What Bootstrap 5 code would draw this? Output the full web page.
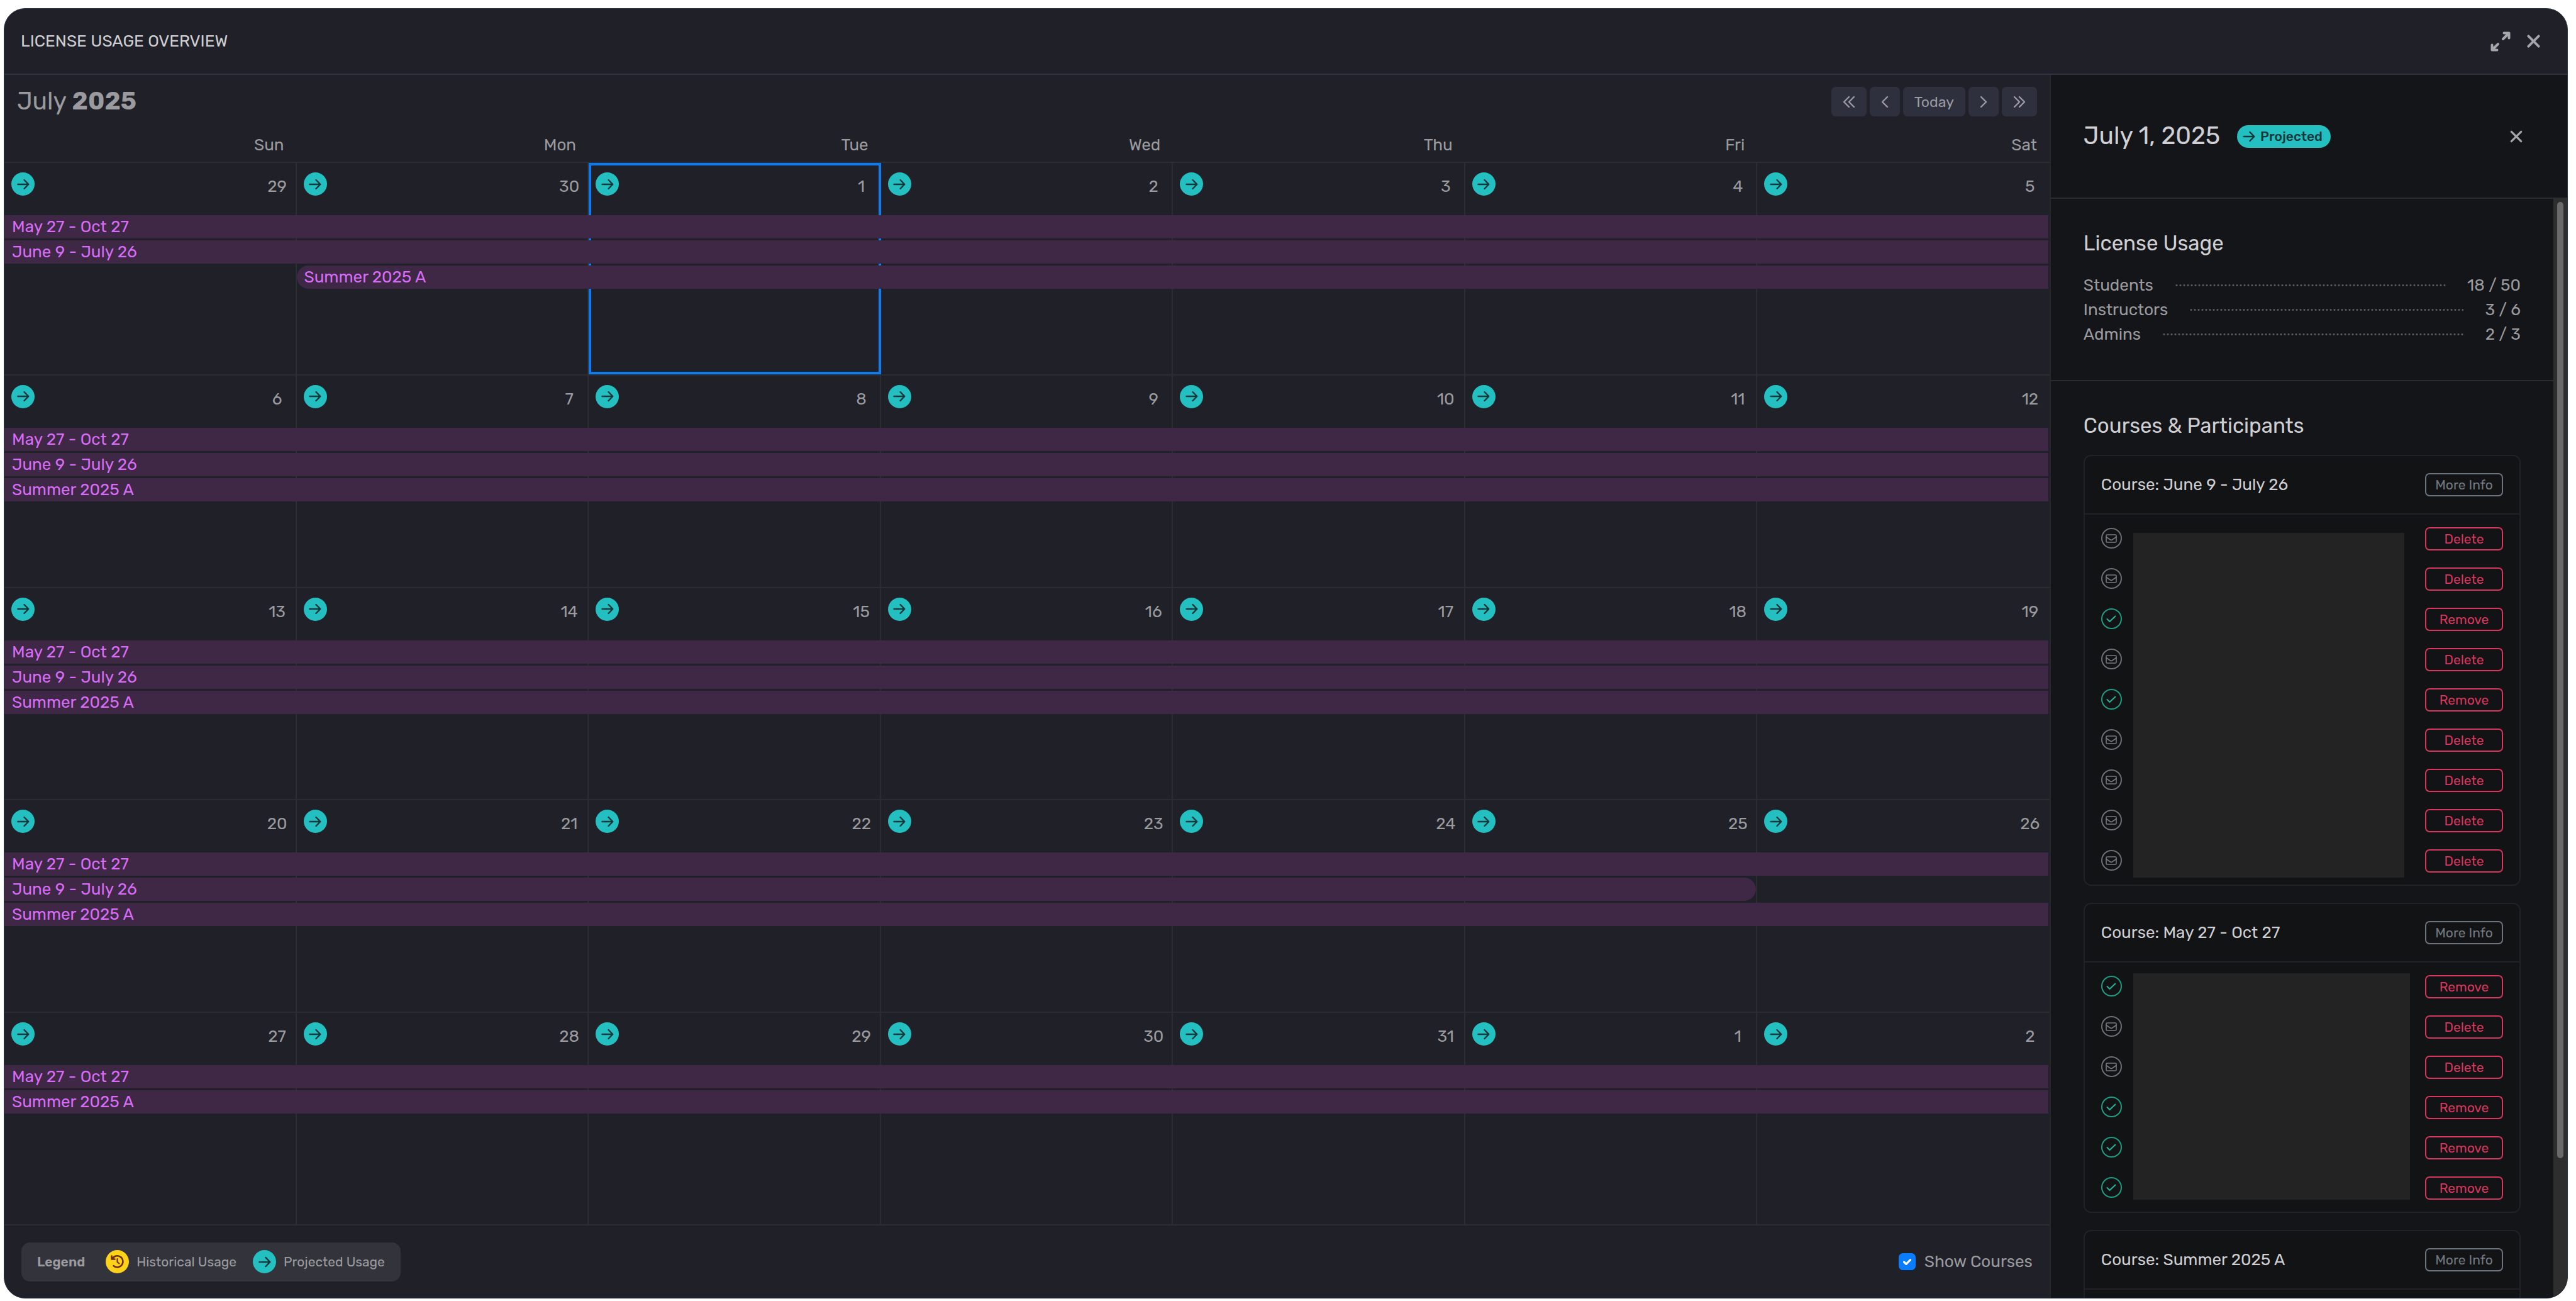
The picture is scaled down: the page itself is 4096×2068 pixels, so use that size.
<!DOCTYPE html>
<html lang="en" data-bs-theme="dark">
<head>
<meta charset="utf-8">
<meta name="viewport" content="width=device-width, initial-scale=1">
<title>License Usage Overview</title>
<link href="https://cdn.jsdelivr.net/npm/bootstrap@5.3.0/dist/css/bootstrap.min.css" rel="stylesheet">
<style>
  :root { --line: #2c2d32; --muted: #9b9b9f; --bright: #cfcfd3; --teal: #24bfc0; }
  body { background: #fff; font-family: Rubik, Roboto, sans-serif; font-size: 26px; line-height: 40px; color: var(--muted); height: 100vh; padding: 13px 13px 4px 6px; overflow: hidden; }
  svg { display: block; fill: none; stroke: currentColor; stroke-linecap: round; stroke-linejoin: round; }
  h1, h2, h3, h4 { margin: 0; font-weight: 400; color: var(--bright); }
  .shell { background: #1f2028; border: 1px solid #2b3746; border-radius: 34px; overflow: hidden; }
  .shell-head { height: 105px; padding: 0 43px 0 26px; border-bottom: 2px solid #2b3440; }
  .shell-head h1 { font-size: 26px; }
  .head-tools { gap: 26px; }
  .icon-btn { padding: 0; border: 0; background: none; color: #a5a5aa; }

  .month-bar { height: 85px; padding: 0 20px 0 20px; }
  .month-bar h2 { font-size: 39px; color: var(--muted); }
  .month-bar strong { font-weight: 700; }
  .month-nav { gap: 5px; }
  .nav-btn { height: 47px; border: 0; border-radius: 7px; background: #2f303d; color: #9a9ba4; font-size: 23px; padding: 0 18px; display: flex; align-items: center; }
  .nav-btn:hover { background: #383949; color: #fff; }
  .week-grid { display: grid; grid-template-columns: repeat(7, minmax(0, 1fr)); }
  .day-names { height: 55px; border-bottom: 2px solid var(--line); text-align: right; align-items: center; }
  .day-names > div { padding-right: 20px; }
  .week { flex: 1 1 0; grid-template-rows: 83px repeat(3, 40px) 1fr; border-bottom: 2px solid var(--line); }
  .day-cell { grid-row: 1 / -1; border-right: 2px solid var(--line); padding: 15px 12px 0 11px; display: flex; justify-content: space-between; align-items: flex-start; }
  .day-cell:nth-child(7) { border-right: 0; padding-right: 14px; }
  .day-cell.picked { border: 4px solid #0c7cf0; padding: 11px 10px 0 7px; }
  .day-num { width: 34px; text-align: center; margin-top: 3px; }
  .dot { width: 37px; height: 37px; border-radius: 50%; background: var(--teal); color: #12383c; display: flex; align-items: center; justify-content: center; flex: none; }
  .dot.past { background: #ffd21a; color: #6d2b06; }
  .course-bar { height: 37px; line-height: 37px; margin: 0 2px 3px 0; padding-left: 12px; background: #3f2746; color: #d96cf6; white-space: nowrap; text-decoration: none; z-index: 1; }
  .course-bar:hover { color: #fff; }
  .course-bar.starts { border-radius: 19px 0 0 19px; }
  .course-bar.ends { border-radius: 0 19px 19px 0; }

  .cal-foot { height: 115px; padding: 0 27px 0 27px; }
  .legend { height: 62px; padding: 0 25px; border-radius: 14px; background: #33343b; font-size: 21px; }
  .legend-title { margin-right: 33px; font-weight: 600; }
  .legend-label { margin-left: 12px; }
  .legend-label + .dot { margin-left: 26px; }
  .form-check-input { width: 27px; height: 27px; border-radius: 6px; margin: 0 14px 0 0; background-size: 22px; }
  .form-check-input:checked { background-color: #0a7cff; border-color: #0a7cff; }

  .side { width: 20.2%; background: #141518; border-left: 2px solid #26282b; }
  .side-head { height: 197px; padding: 0 71px 0 52px; border-bottom: 2px solid #2a2b2e; }
  .side-head h2 { font-size: 39px; }
  .proj-pill { height: 36px; margin-left: 27px; padding: 0 13px 0 9px; border-radius: 18px; background: var(--teal); color: #12383c; font-size: 21px; font-weight: 500; gap: 8px; }
  .side h3 { font-size: 33px; }
  .usage { padding: 51px 52px 50px; border-bottom: 2px solid #2a2b2e; }
  .usage dl { margin: 27px 0 3px; line-height: 39px; }
  .usage dt, .usage dd { margin: 0; font-weight: 400; }
  .leader { flex: 1; height: 3px; margin: 0 34px; background: radial-gradient(circle, #5a5b5f 1px, transparent 2px) 0 0 / 6px 3px repeat-x; }
  .courses { padding: 51px 52px 0; }
  .course-card { border: 2px solid #212225; border-radius: 12px; background: #111314; margin-top: 27px; }
  .course-card header { height: 93px; padding: 0 26px; border-bottom: 2px solid #212225; }
  .course-card h4 { font-size: 26px; }
  .course-body { padding: 6px 26px; }
  .stack { display: flex; flex-direction: column; }
  .stack > * { margin: 14px 0 13px; }
  .stack > .state { margin: 15px 0 16px; }
  .state { width: 33px; height: 33px; border: 2px solid #6d6f73; border-radius: 50%; color: #77797e; display: flex; align-items: center; justify-content: center; }
  .state.ok { border-color: #1d9c82; color: #1fb595; }
  .mini { width: 124px; height: 37px; padding: 0; border-radius: 7px; font-size: 21px; line-height: 31px; border-width: 2px; }
  .mini.btn-outline-secondary { --bs-btn-color: #727780; --bs-btn-border-color: #6c757d; }
  .mini.btn-outline-danger { --bs-btn-color: #d8365f; --bs-btn-border-color: #d8365f; }
  .cover { flex: 1; background: #232323; }
  .cover.a { margin: 23px 33px 5px 18px; }
  .cover.b { margin: 11px 24px 13px 18px; }
  .track { width: 22px; background: #2e2e2e; padding: 5px 6px; }
  .thumb { width: 10px; height: 87.5%; border-radius: 5px; background: #6a6a6a; }
</style>
</head>
<body>
<svg class="d-none">
  <symbol id="arrow" viewBox="0 0 20 20"><path d="M1.5 10H18M11.500 3L18.300 10L11.500 17"/></symbol>
  <symbol id="cross" viewBox="0 0 22 22"><path d="M2.500 2.500L19.500 19.500M19.500 2.500L2.500 19.500"/></symbol>
  <symbol id="tick" viewBox="0 0 16 12"><path d="M1.500 6L5.500 10L14.500 1.500"/></symbol>
  <symbol id="mail" viewBox="0 0 18 14"><rect x="1" y="1" width="16" height="12" rx="1.500"/><path d="M1 4.500L7.500 9Q9 10 10.500 9L17 4.500"/></symbol>
</svg>

<div class="shell d-flex flex-column h-100">
  <div class="shell-head d-flex align-items-center justify-content-between flex-shrink-0">
    <h1>LICENSE USAGE OVERVIEW</h1>
    <div class="head-tools d-flex align-items-center">
      <button class="icon-btn" type="button" aria-label="Expand">
        <svg width="32" height="32" viewBox="0 0 32 32" stroke-width="4"><path d="M20 12L29 3M21.500 2.500H29.500V10.500M12 20L3 29M2.500 21.500V29.500H10.500"/></svg>
      </button>
      <button class="icon-btn" type="button" aria-label="Close"><svg width="21" height="21" stroke-width="4"><use href="#cross"/></svg></button>
    </div>
  </div>

  <div class="d-flex flex-grow-1 overflow-hidden">
    <main class="d-flex flex-column flex-grow-1">
      <div class="month-bar d-flex align-items-center justify-content-between">
        <h2>July <strong>2025</strong></h2>
        <div class="month-nav d-flex">
          <button class="nav-btn" type="button" aria-label="Previous year"><svg width="20" height="20" viewBox="0 0 20 20" stroke-width="2.400"><path d="M10 2L2 10L10 18M18 2L10 10L18 18"/></svg></button>
          <button class="nav-btn" type="button" aria-label="Previous month"><svg width="12" height="20" viewBox="0 0 12 20" stroke-width="2.400"><path d="M10 2L2 10L10 18"/></svg></button>
          <button class="nav-btn" type="button">Today</button>
          <button class="nav-btn" type="button" aria-label="Next month"><svg width="12" height="20" viewBox="0 0 12 20" stroke-width="2.400"><path d="M2 2L10 10L2 18"/></svg></button>
          <button class="nav-btn" type="button" aria-label="Next year"><svg width="20" height="20" viewBox="0 0 20 20" stroke-width="2.400"><path d="M2 2L10 10L2 18M10 2L18 10L10 18"/></svg></button>
        </div>
      </div>
      <div class="week-grid day-names"><div>Sun</div><div>Mon</div><div>Tue</div><div>Wed</div><div>Thu</div><div>Fri</div><div>Sat</div></div>
      <div id="weeks" class="d-flex flex-column flex-grow-1"></div>
      <div class="cal-foot d-flex align-items-center justify-content-between">
        <div class="legend d-flex align-items-center">
          <strong class="legend-title">Legend</strong>
          <span class="dot past"><svg width="23" height="23" viewBox="0 0 23 23" stroke-width="2.500"><path d="M3.500 7A9 9 0 1 1 5.500 18M2.500 2.500V7.500H7.500"/><path d="M11.500 7V12L14.500 14.500" stroke-width="2"/></svg></span>
          <span class="legend-label">Historical Usage</span>
          <span class="dot"><svg width="20" height="20" stroke-width="2.500"><use href="#arrow"/></svg></span>
          <span class="legend-label">Projected Usage</span>
        </div>
        <div class="d-flex align-items-center">
          <input class="form-check-input" type="checkbox" id="showCourses" checked>
          <label for="showCourses">Show Courses</label>
        </div>
      </div>
    </main>

    <aside class="side d-flex flex-column flex-shrink-0">
      <div class="side-head d-flex align-items-center flex-shrink-0">
        <h2>July 1, 2025</h2>
        <span class="proj-pill d-flex align-items-center"><svg width="20" height="20" stroke-width="2.500"><use href="#arrow"/></svg>Projected</span>
        <button class="icon-btn ms-auto" type="button" aria-label="Close day"><svg width="20" height="20" stroke-width="3.500"><use href="#cross"/></svg></button>
      </div>
      <div class="d-flex flex-grow-1 overflow-hidden">
        <div class="flex-grow-1 overflow-hidden">
          <section class="usage">
            <h3>License Usage</h3>
            <dl>
              <div class="d-flex align-items-center"><dt>Students</dt><span class="leader"></span><dd>18 / 50</dd></div>
              <div class="d-flex align-items-center"><dt>Instructors</dt><span class="leader"></span><dd>3 / 6</dd></div>
              <div class="d-flex align-items-center"><dt>Admins</dt><span class="leader"></span><dd>2 / 3</dd></div>
            </dl>
          </section>
          <section class="courses" id="courses"><h3>Courses &amp; Participants</h3></section>
        </div>
        <div class="track"><div class="thumb"></div></div>
      </div>
    </aside>
  </div>
</div>

<script>
  const MAY = 'May 27 - Oct 27', JUNE = 'June 9 - July 26', SUMMER = 'Summer 2025 A';
  // each bar: name, first column, end column, extra class
  const weeks = [
    [[29, 30, 1, 2, 3, 4, 5], [[MAY, 1, 8], [JUNE, 1, 8], [SUMMER, 2, 8, 'starts']]],
    [[6, 7, 8, 9, 10, 11, 12], [[MAY, 1, 8], [JUNE, 1, 8], [SUMMER, 1, 8]]],
    [[13, 14, 15, 16, 17, 18, 19], [[MAY, 1, 8], [JUNE, 1, 8], [SUMMER, 1, 8]]],
    [[20, 21, 22, 23, 24, 25, 26], [[MAY, 1, 8], [JUNE, 1, 7, 'ends'], [SUMMER, 1, 8]]],
    [[27, 28, 29, 30, 31, 1, 2], [[MAY, 1, 8], [SUMMER, 1, 8]]]
  ];
  const arrow = '<span class="dot"><svg width="20" height="20" stroke-width="2.4"><use href="#arrow"/></svg></span>';
  document.getElementById('weeks').innerHTML = weeks.map(([days, bars], w) =>
    '<div class="week-grid week">' +
    days.map((d, i) => `<div class="day-cell${w === 0 && i === 2 ? ' picked' : ''}" style="grid-column:${i + 1}">${arrow}<span class="day-num">${d}</span></div>`).join('') +
    bars.map(([name, a, b, cls], r) => `<a href="#" class="course-bar ${cls || ''}" style="grid-row:${r + 2};grid-column:${a}/${b}">${name}</a>`).join('') +
    '</div>').join('');

  // m = invitation mailed, k = accepted
  const courses = [[JUNE, 'mmkmkmmmm', 'a'], [MAY, 'kmmkkk', 'b'], [SUMMER, '', 'b']];
  document.getElementById('courses').insertAdjacentHTML('beforeend', courses.map(([name, people, cover]) =>
    `<article class="course-card"><header class="d-flex align-items-center justify-content-between"><h4>Course: ${name}</h4><button type="button" class="btn btn-outline-secondary mini">More Info</button></header>
    <div class="course-body d-flex"><div class="stack">` +
    [...people].map(p => p === 'k'
      ? '<span class="state ok"><svg width="16" height="12" stroke-width="2"><use href="#tick"/></svg></span>'
      : '<span class="state"><svg width="18" height="14" stroke-width="1.6"><use href="#mail"/></svg></span>').join('') +
    `</div><div class="cover ${cover}"></div><div class="stack">` +
    [...people].map(p => `<button type="button" class="btn btn-outline-danger mini">${p === 'k' ? 'Remove' : 'Delete'}</button>`).join('') +
    '</div></div></article>').join(''));
</script>
<script src="https://cdn.jsdelivr.net/npm/bootstrap@5.3.0/dist/js/bootstrap.bundle.min.js"></script>
</body>
</html>
